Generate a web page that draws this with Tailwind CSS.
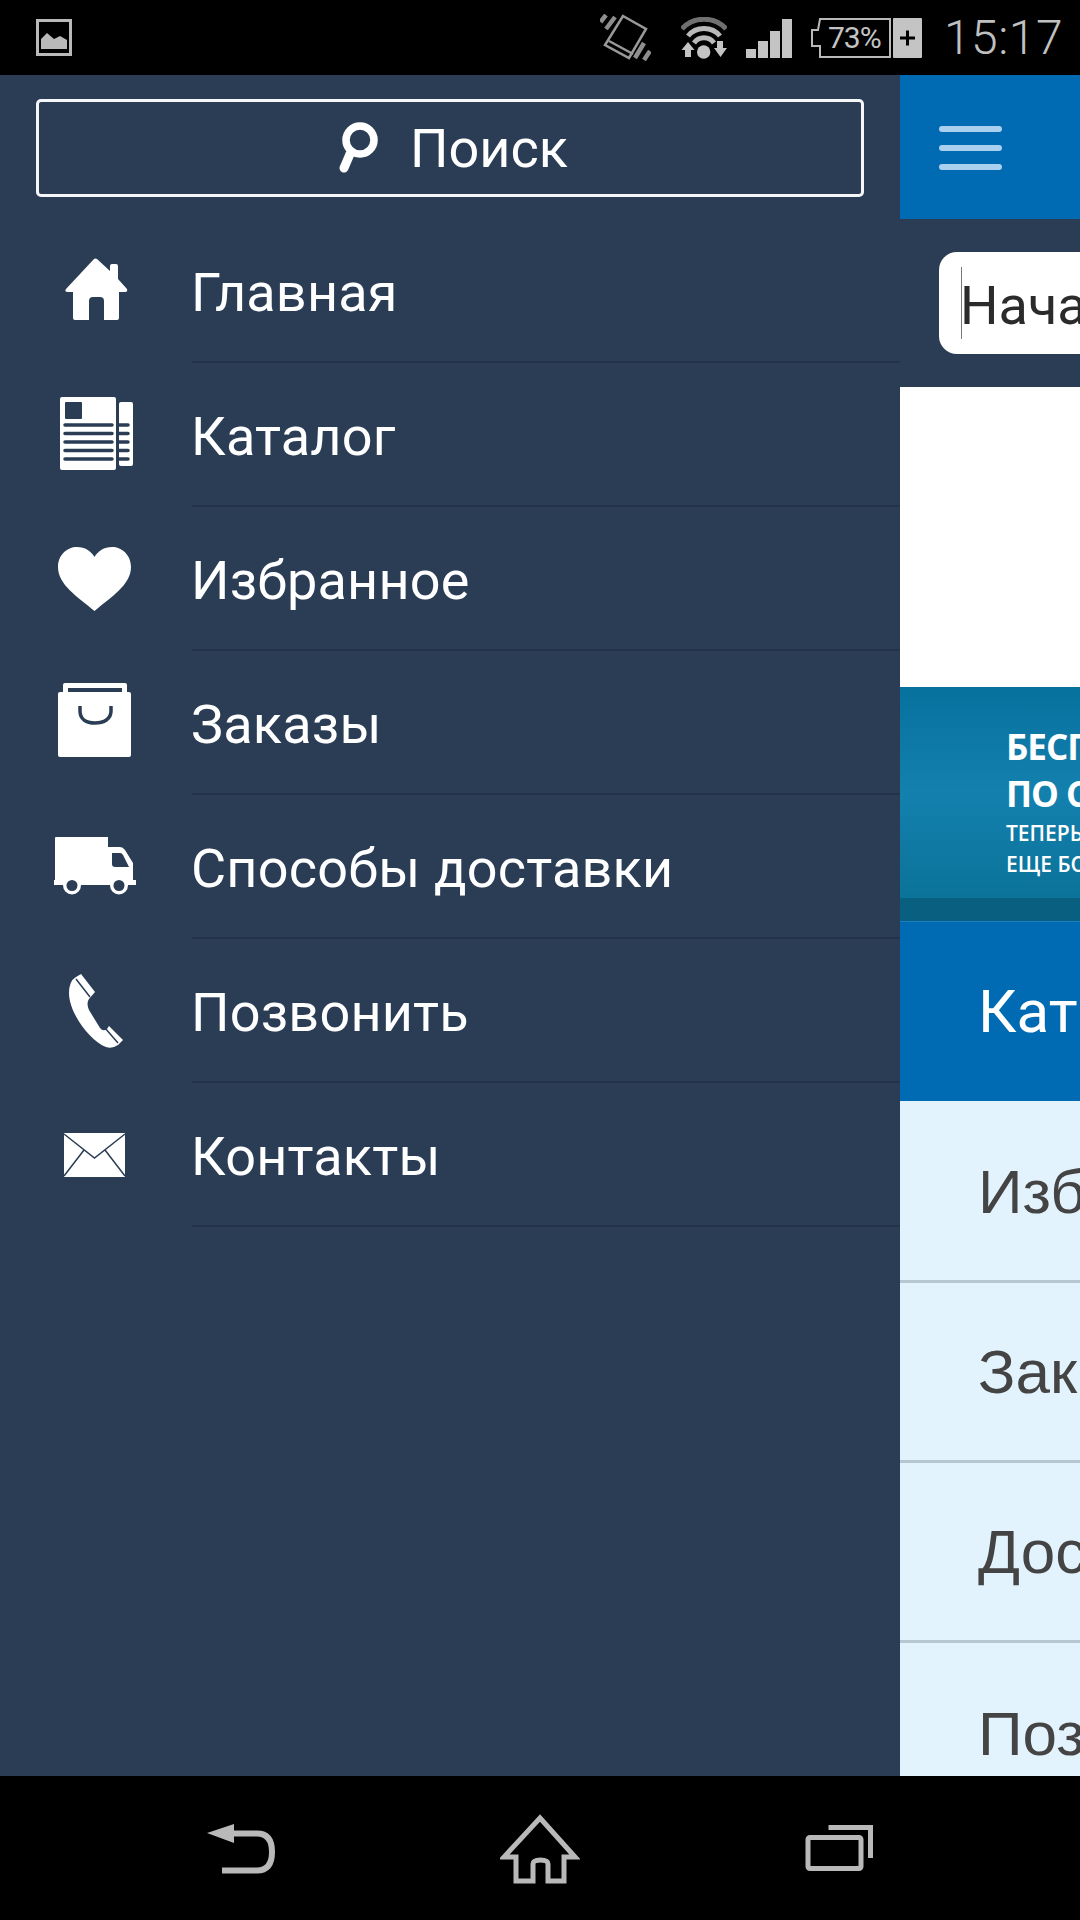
<!DOCTYPE html>
<html lang="ru">
<head>
  <meta charset="UTF-8" />
  <title>Меню</title>
  <script src="https://cdn.jsdelivr.net/npm/@tailwindcss/browser@4"></script>
</head>
<body class="bg-black w-[1080px] h-[1920px] overflow-hidden flex flex-col font-['Roboto',sans-serif]">
  <!-- status bar -->
  <div class="h-[75px] flex items-center pl-[36px] text-[#b9b9b9] shrink-0">
    <svg class="w-[36px] h-[37px]" viewBox="0 0 36 37">
      <rect x="1.5" y="1.5" width="33" height="34" fill="none" stroke="#b9b9b9" stroke-width="3"/>
      <path d="M5 30V20L11 14L18 20L24 17L31 21V30Z" fill="#b9b9b9"/>
    </svg>
    <svg class="ml-auto w-[51px] h-[47px]" viewBox="0 0 51 47" fill="none" stroke="#999" stroke-width="2.5">
      <path d="M23 2L46 15L29 44L5 31Z"/>
      <path d="M9 27L33 40"/>
      <path d="M0.500 8L6 1M6 15L15 3M35 44L44 29M44 46L50 37" stroke-width="4.500" stroke="#8e8e8e"/>
    </svg>
    <svg class="ml-[30px] w-[46px] h-[42px]" viewBox="0 0 46 42" fill="none">
      <path d="M1 12C12 -1 34 -1 45 12" stroke="#707070" stroke-width="5"/>
      <path d="M7 19C15 9 31 9 39 19" stroke="#b9b9b9" stroke-width="5"/>
      <path d="M13 26C18 19 28 19 33 26" stroke="#b9b9b9" stroke-width="5"/>
      <circle cx="22.700" cy="35" r="6.700" fill="#c4c4c4"/>
      <path d="M7 25L13.500 33H10V40H4V33H0.500ZM36 24H42V31H46L39.500 40L33 31H36Z" fill="#c4c4c4"/>
    </svg>
    <svg class="ml-[19px] w-[46px] h-[40px]" viewBox="0 0 46 40" fill="#c4c4c4">
      <rect x="0" y="31" width="10" height="9"/>
      <rect x="12" y="23" width="10" height="17"/>
      <rect x="24" y="13" width="10" height="27"/>
      <rect x="36" y="1" width="10" height="39"/>
    </svg>
    <div class="relative ml-[19px] w-[80px] h-[40px]">
      <svg class="absolute inset-0 w-[80px] h-[40px]" viewBox="0 0 80 40" fill="none" stroke="#b9b9b9" stroke-width="2">
        <path d="M9 1H79V39H9V28H1V12H7L9 1Z"/>
      </svg>
      <span class="absolute left-[17px] top-[1px] text-[30px] leading-[38px] tracking-[-1px] text-[#c4c4c4]">73%</span>
    </div>
    <svg class="ml-[2px] w-[29px] h-[40px]" viewBox="0 0 29 40">
      <rect width="29" height="40" rx="1" fill="#c4c4c4"/>
      <path d="M7 20H22M14.5 12.5V27.5" stroke="#000" stroke-width="3"/>
    </svg>
    <span class="ml-[22px] mr-[17px] text-[48px] leading-none font-light tracking-[0.5px] text-[#c0c0c0]">15:17</span>
  </div>

  <div class="flex h-[1701px] shrink-0">
    <!-- drawer -->
    <aside class="w-[900px] shrink-0 bg-[#2a3d55] text-white">
      <div class="h-[144px] px-[36px] pt-[24px]">
        <div class="h-[98px] border-[3px] border-[#f4f6f8] rounded-[5px] flex items-center justify-center pl-[6px]">
          <svg class="w-[41px] h-[52px]" viewBox="0 0 41 52" fill="none" stroke="#fff">
            <circle cx="22" cy="18" r="14" stroke-width="7.5"/>
            <path d="M12 32L6 46" stroke-width="9" stroke-linecap="round"/>
          </svg>
          <span class="ml-[31px] pt-[2px] text-[54px] leading-none">Поиск</span>
        </div>
      </div>
      <ul>
        <li class="h-[144px] flex">
          <div class="w-[192px] pl-[48px] pt-[24px] shrink-0">
            <svg class="w-[96px] h-[96px]" viewBox="0 0 96 96" fill="#fff">
              <path d="M49 16L62 28V23Q62 21 64 21H68Q70 21 70 23V36L79 46Q80 49 77 49H71V75Q71 77 69 77H56V58Q56 54 52 54H45Q41 54 41 58V77H27Q25 77 25 75V49H20Q16 49 18 46L46 16Q47.500 15 49 16Z"/>
            </svg>
          </div>
          <div class="flex-1 flex items-center pt-[5px] indent-[-1px] border-b-2 border-[#22334a] text-[54px] tracking-[0.2px]">Главная</div>
        </li>
        <li class="h-[144px] flex">
          <div class="w-[192px] pl-[48px] pt-[24px] shrink-0">
            <svg class="w-[96px] h-[96px]" viewBox="0 0 96 96">
              <rect x="12" y="10" width="56" height="73" rx="2" fill="#fff"/>
              <rect x="71" y="15" width="14" height="64" rx="2" fill="#fff"/>
              <rect x="17" y="15" width="17" height="17" rx="1" fill="#2a3d55"/>
              <path d="M17 38H64M17 46.500H64M17 55H64M17 63.500H64M17 72H64M71 38H80M71 46.500H80M71 55H80M71 63.500H80M71 72H80" stroke="#2a3d55" stroke-width="3.500" stroke-linecap="round"/>
            </svg>
          </div>
          <div class="flex-1 flex items-center pt-[5px] indent-[-1px] border-b-2 border-[#22334a] text-[54px] tracking-[0.2px]">Каталог</div>
        </li>
        <li class="h-[144px] flex">
          <div class="w-[192px] pl-[48px] pt-[24px] shrink-0">
            <svg class="w-[96px] h-[96px]" viewBox="0 0 96 96" fill="#fff">
              <path d="M46.500 80C30 66 10 54 10 36C10 24 19 16 29 16C37 16 43 20 46.500 26C50 20 56 16 64 16C74 16 83 24 83 36C83 54 63 66 46.500 80Z"/>
            </svg>
          </div>
          <div class="flex-1 flex items-center pt-[5px] indent-[-1px] border-b-2 border-[#22334a] text-[54px] tracking-[0.2px]">Избранное</div>
        </li>
        <li class="h-[144px] flex">
          <div class="w-[192px] pl-[48px] pt-[24px] shrink-0">
            <svg class="w-[96px] h-[96px]" viewBox="0 0 96 96">
              <rect x="15" y="8" width="64" height="14" rx="2" fill="#fff"/>
              <rect x="10" y="17" width="73" height="65" rx="2" fill="#fff"/>
              <rect x="20" y="13" width="54" height="4" fill="#2a3d55"/>
              <path d="M32 31V36C32 44 38 48 47 48C56 48 63 44 63 36V31" fill="none" stroke="#2a3d55" stroke-width="3.500"/>
            </svg>
          </div>
          <div class="flex-1 flex items-center pt-[5px] indent-[-1px] border-b-2 border-[#22334a] text-[54px] tracking-[0.2px]">Заказы</div>
        </li>
        <li class="h-[144px] flex">
          <div class="w-[192px] pl-[48px] pt-[24px] shrink-0">
            <svg class="w-[96px] h-[96px]" viewBox="0 0 96 96">
              <path d="M8 18H60V28H72Q75 28 77 31L85 44V61H88V66H6V61H7V19Q7 18 8 18Z" fill="#fff"/>
              <path d="M64 34H72Q74 34 75 36L81 48H67Q64 48 64 45Z" fill="#2a3d55"/>
              <circle cx="24" cy="66.500" r="9" fill="#fff"/>
              <circle cx="71" cy="66.500" r="9" fill="#fff"/>
              <circle cx="24" cy="66.500" r="5.500" fill="#2a3d55"/>
              <circle cx="71" cy="66.500" r="5.500" fill="#2a3d55"/>
            </svg>
          </div>
          <div class="flex-1 flex items-center pt-[5px] indent-[-1px] border-b-2 border-[#22334a] text-[54px] tracking-[0.2px]">Способы доставки</div>
        </li>
        <li class="h-[144px] flex">
          <div class="w-[192px] pl-[48px] pt-[24px] shrink-0">
            <svg class="w-[96px] h-[96px]" viewBox="0 0 96 96">
              <path d="M33 11L47 29L41 36Q38 40 41 47L52 65Q55 69 59 66L61 63L75 77L70 82Q64 86 58 84C42 78 21 50 21 30Q21 18 28 14Z" fill="#fff"/>
              <path d="M28 16L42 34M57 65L70 80" stroke="#2a3d55" stroke-width="1.500" fill="none"/>
            </svg>
          </div>
          <div class="flex-1 flex items-center pt-[5px] indent-[-1px] border-b-2 border-[#22334a] text-[54px] tracking-[0.2px]">Позвонить</div>
        </li>
        <li class="h-[144px] flex">
          <div class="w-[192px] pl-[48px] pt-[24px] shrink-0">
            <svg class="w-[96px] h-[96px]" viewBox="0 0 96 96">
              <rect x="16" y="26" width="61" height="44" fill="#fff"/>
              <path d="M16 27L46.500 51L77 27M16 69L36 43M77 69L57 43" stroke="#2a3d55" stroke-width="1.500" fill="none"/>
            </svg>
          </div>
          <div class="flex-1 flex items-center pt-[5px] indent-[-1px] border-b-2 border-[#22334a] text-[54px] tracking-[0.2px]">Контакты</div>
        </li>
      </ul>
    </aside>

    <!-- page behind the drawer -->
    <main class="w-[180px] shrink-0 overflow-hidden whitespace-nowrap">
      <div class="h-[144px] bg-[#006bb3] pl-[39px] pt-[51px] flex flex-col gap-[13px]">
        <span class="w-[63px] h-[6px] rounded-full bg-[#a9d0ee]"></span>
        <span class="w-[63px] h-[6px] rounded-full bg-[#a9d0ee]"></span>
        <span class="w-[63px] h-[6px] rounded-full bg-[#a9d0ee]"></span>
      </div>
      <div class="h-[168px] bg-[#2a3d55] pl-[39px] pt-[33px]">
        <div class="w-[300px] h-[102px] bg-white rounded-[18px] flex items-center pl-[21px] pt-[4px] text-[54px] text-[#2b2b2b] relative">
          <span class="absolute left-[22px] top-[15px] w-px h-[72px] bg-[#777]"></span>
          Начать поиск
        </div>
      </div>
      <div class="h-[300px] bg-white"></div>
      <div class="h-[211px] flex flex-col bg-linear-to-b from-[#07719e] via-[#1380ae] to-[#0b7399] pl-[106px] font-['Open_Sans',sans-serif] font-bold text-white">
        <span class="mt-[36px] text-[35px] leading-[48px] tracking-[-1px]">БЕСПЛАТНАЯ</span>
        <span class="text-[35px] leading-[46px] tracking-[-1px]">ПО СТРАНЕ</span>
        <span class="text-[21px] leading-[32px] font-semibold">ТЕПЕРЬ</span>
        <span class="text-[21px] leading-[30px] font-semibold">ЕЩЕ БОЛЬШЕ</span>
      </div>
      <div class="h-[23px] bg-[#085f80]"></div>
      <div class="h-[180px] bg-[#006bb3] border-t border-[#1a7dbd] pl-[78px] flex items-center text-[60px] text-white">Каталог</div>
      <ul class="pt-[2px] bg-[#e3f3fe] font-['Liberation_Sans',sans-serif] text-[62px] text-[#444]">
        <li class="h-[180px] flex items-center pl-[78px] border-b-[3px] border-[#b7c6d1]">Избранное</li>
        <li class="h-[180px] flex items-center pl-[78px] border-b-[3px] border-[#b7c6d1]">Заказы</li>
        <li class="h-[180px] flex items-center pl-[78px] border-b-[3px] border-[#b7c6d1]">Доставка</li>
        <li class="h-[180px] flex items-center pl-[78px]">Позвонить</li>
      </ul>
    </main>
  </div>

  <!-- nav bar -->
  <div class="flex-1 flex items-center justify-center gap-[219px]">
    <svg class="w-[80px] h-[80px]" viewBox="0 0 80 80" fill="none" stroke="#b9b9b9">
      <path d="M6 25L33 16V35Z" fill="#b9b9b9" stroke="none"/>
      <path d="M30 25.500H56Q71 25.500 71 44Q71 62.500 56 62.500H21" stroke-width="6"/>
    </svg>
    <svg class="w-[80px] h-[80px]" viewBox="0 0 80 80" fill="none" stroke="#b9b9b9" stroke-width="5" stroke-linejoin="miter">
      <path d="M40 10L75 49H64V73H48V56Q48 52 40.500 52Q33 52 33 56V73H16V49H4Z"/>
    </svg>
    <svg class="w-[80px] h-[80px]" viewBox="0 0 80 80" fill="none" stroke="#b9b9b9" stroke-width="5">
      <rect x="9" y="29.500" width="53" height="31" rx="2"/>
      <path d="M29.500 19.500H71.500V50"/>
    </svg>
  </div>
</body>
</html>
